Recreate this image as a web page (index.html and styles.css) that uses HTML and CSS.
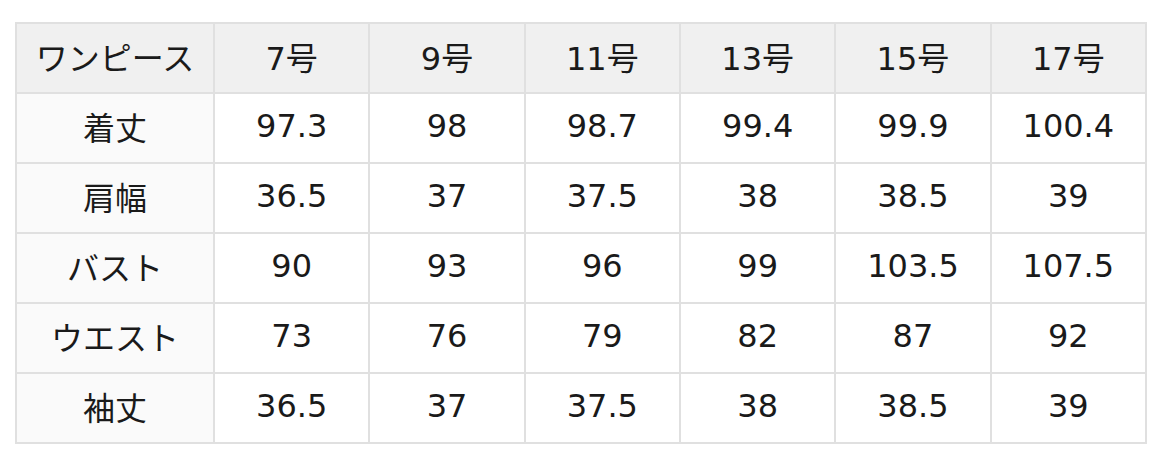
FILE: index.html
```html
<!DOCTYPE html>
<html lang="ja">
<head>
<meta charset="utf-8">
<link rel="stylesheet" href="styles.css">
</head>
<body>
<div class="wrap">
<table class="size">
<colgroup><col class="c0"><col class="cn"><col class="cn"><col class="cn"><col class="cn"><col class="cn"><col class="cn"></colgroup>
<thead>
<tr><th>ワンピース</th><th>7号</th><th>9号</th><th>11号</th><th>13号</th><th>15号</th><th>17号</th></tr>
</thead>
<tbody>
<tr><th>着丈</th><td>97.3</td><td>98</td><td>98.7</td><td>99.4</td><td>99.9</td><td>100.4</td></tr>
<tr><th>肩幅</th><td>36.5</td><td>37</td><td>37.5</td><td>38</td><td>38.5</td><td>39</td></tr>
<tr><th>バスト</th><td>90</td><td>93</td><td>96</td><td>99</td><td>103.5</td><td>107.5</td></tr>
<tr><th>ウエスト</th><td>73</td><td>76</td><td>79</td><td>82</td><td>87</td><td>92</td></tr>
<tr><th>袖丈</th><td>36.5</td><td>37</td><td>37.5</td><td>38</td><td>38.5</td><td>39</td></tr>
</tbody>
</table>
</div>
</body>
</html>
```
FILE: styles.css
```css
html, body { margin: 0; padding: 0; background: #fff; }
.wrap { padding: 22px 0 0 15px; }
.size {
  border-collapse: collapse;
  table-layout: fixed;
  width: 1132px;
  font-family: "DejaVu Sans", "Noto Sans CJK JP", sans-serif;
  font-size: 32px;
  color: #1a1a1a;
}
.c0 { width: 198px; }
.size th, .size td {
  border: 2px solid #e0e0e0;
  height: 64px;
  padding: 0 0 4px;
  text-align: center;
  vertical-align: middle;
  font-weight: normal;
  white-space: nowrap;
}
.size thead th { background: #f0f0f0; }
.size tbody th { background: #fafafa; }
.size td { background: #fff; }
```
